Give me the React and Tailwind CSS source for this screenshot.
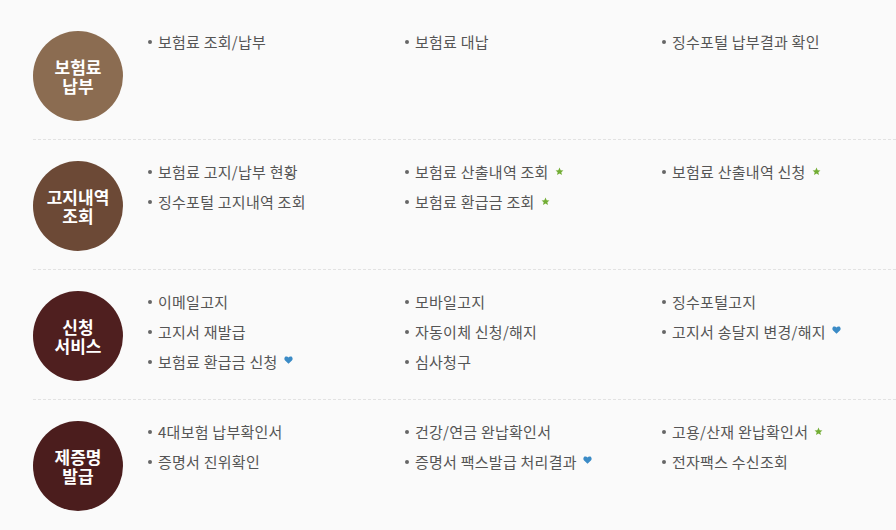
const STAR = (
  <svg width="9" height="9" viewBox="0 0 24 24" className="ml-[6px] inline-block -translate-y-[1px]" fill="#72ad34">
    <path d="M12 1.5l3.1 6.9 7.4.7-5.6 5 1.7 7.4L12 17.6l-6.6 3.9 1.7-7.4-5.6-5 7.4-.7z" />
  </svg>
)

const HEART = (
  <svg width="9" height="8" viewBox="0 0 24 22" className="ml-[6px] inline-block -translate-y-[2px]" fill="#3b8bc6">
    <path d="M12 21.5L2.6 12.2C-.6 9 .2 3.4 4.4 1.6 7.3.4 10.2 1.5 12 4c1.8-2.5 4.7-3.6 7.6-2.4 4.2 1.8 5 7.4 1.8 10.6z" />
  </svg>
)

const SECTIONS = [
  {
    title: ['보험료', '납부'],
    color: 'bg-[#8b6c51]',
    items: [
      { label: '보험료 조회/납부' },
      { label: '보험료 대납' },
      { label: '징수포털 납부결과 확인' },
    ],
  },
  {
    title: ['고지내역', '조회'],
    color: 'bg-[#6c4936]',
    items: [
      { label: '보험료 고지/납부 현황' },
      { label: '보험료 산출내역 조회', mark: 'star' },
      { label: '보험료 산출내역 신청', mark: 'star' },
      { label: '징수포털 고지내역 조회' },
      { label: '보험료 환급금 조회', mark: 'star' },
    ],
  },
  {
    title: ['신청', '서비스'],
    color: 'bg-[#4f1f1f]',
    items: [
      { label: '이메일고지' },
      { label: '모바일고지' },
      { label: '징수포털고지' },
      { label: '고지서 재발급' },
      { label: '자동이체 신청/해지' },
      { label: '고지서 송달지 변경/해지', mark: 'heart' },
      { label: '보험료 환급금 신청', mark: 'heart' },
      { label: '심사청구' },
    ],
  },
  {
    title: ['제증명', '발급'],
    color: 'bg-[#4b1d1d]',
    items: [
      { label: '4대보험 납부확인서' },
      { label: '건강/연금 완납확인서' },
      { label: '고용/산재 완납확인서', mark: 'star' },
      { label: '증명서 진위확인' },
      { label: '증명서 팩스발급 처리결과', mark: 'heart' },
      { label: '전자팩스 수신조회' },
    ],
  },
]

export default function App() {
  return (
    <div
      className="min-h-[530px] w-[896px] bg-[#fafafa] pt-[10px] pl-[33px] text-[#555]"
      style={{ fontFamily: '"Noto Sans CJK KR", "Noto Sans", sans-serif' }}
    >
      {SECTIONS.map((s, i) => (
        <div
          key={i}
          className={`flex items-start gap-[21px] pt-[21px] pb-[18px] ${i < SECTIONS.length - 1 ? 'border-b border-dashed border-[#e2e2e2]' : ''}`}
        >
          {/* Category circle */}
          <div
            className={`flex h-[90px] w-[90px] shrink-0 flex-col items-center justify-center rounded-full ${s.color} text-[17px] font-bold leading-[19px] text-white`}
          >
            {s.title.map(t => (
              <span key={t}>{t}</span>
            ))}
          </div>

          {/* Links */}
          <ul className="grid grid-cols-[257px_257px_257px] gap-y-[8px] text-[15px] leading-[22px] tracking-[0.25px]">
            {s.items.map(it => (
              <li key={it.label} className="flex items-center whitespace-nowrap">
                <span className="mr-[6px] ml-[4px] inline-block h-[4px] w-[4px] rounded-full bg-[#666]" />
                {it.label}
                {it.mark === 'star' && STAR}
                {it.mark === 'heart' && HEART}
              </li>
            ))}
          </ul>
        </div>
      ))}
    </div>
  )
}
